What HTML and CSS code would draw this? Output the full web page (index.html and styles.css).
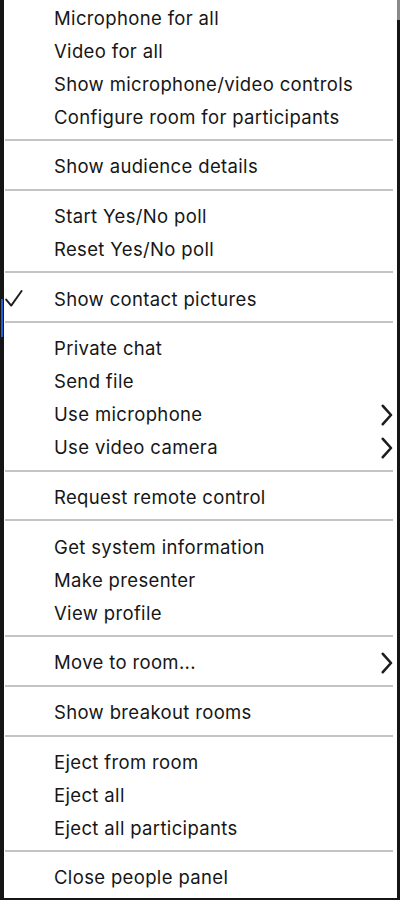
FILE: index.html
```html
<!DOCTYPE html>
<html lang="en">
<head>
<meta charset="utf-8">
<title>People menu</title>
<link rel="stylesheet" href="styles.css">
</head>
<body>
<div class="frame">
  <div class="focus-edge"></div>
  <div class="top-edge"></div>
  <ul class="menu">
    <li class="item"><span class="mark"></span><span class="label">Microphone for all</span></li>
    <li class="item"><span class="mark"></span><span class="label">Video for all</span></li>
    <li class="item"><span class="mark"></span><span class="label">Show microphone/video controls</span></li>
    <li class="item"><span class="mark"></span><span class="label">Configure room for participants</span></li>
    <li class="sep"></li>
    <li class="item"><span class="mark"></span><span class="label">Show audience details</span></li>
    <li class="sep"></li>
    <li class="item"><span class="mark"></span><span class="label">Start Yes/No poll</span></li>
    <li class="item"><span class="mark"></span><span class="label">Reset Yes/No poll</span></li>
    <li class="sep"></li>
    <li class="item"><span class="mark"><svg class="check" width="18" height="18" viewBox="0 0 18 18"><path d="M1.2 9.6 L6.2 15.6 L16.6 1" /></svg></span><span class="label">Show contact pictures</span></li>
    <li class="sep"></li>
    <li class="item"><span class="mark"></span><span class="label">Private chat</span></li>
    <li class="item"><span class="mark"></span><span class="label">Send file</span></li>
    <li class="item"><span class="mark"></span><span class="label">Use microphone</span><svg class="chev" width="12" height="22" viewBox="0 0 12 22"><path d="M1.8 1.8 L10 11 L1.8 20.2" /></svg></li>
    <li class="item"><span class="mark"></span><span class="label">Use video camera</span><svg class="chev" width="12" height="22" viewBox="0 0 12 22"><path d="M1.8 1.8 L10 11 L1.8 20.2" /></svg></li>
    <li class="sep"></li>
    <li class="item"><span class="mark"></span><span class="label">Request remote control</span></li>
    <li class="sep"></li>
    <li class="item"><span class="mark"></span><span class="label">Get system information</span></li>
    <li class="item"><span class="mark"></span><span class="label">Make presenter</span></li>
    <li class="item"><span class="mark"></span><span class="label">View profile</span></li>
    <li class="sep"></li>
    <li class="item"><span class="mark"></span><span class="label">Move to room...</span><svg class="chev" width="12" height="22" viewBox="0 0 12 22"><path d="M1.8 1.8 L10 11 L1.8 20.2" /></svg></li>
    <li class="sep"></li>
    <li class="item"><span class="mark"></span><span class="label">Show breakout rooms</span></li>
    <li class="sep"></li>
    <li class="item"><span class="mark"></span><span class="label">Eject from room</span></li>
    <li class="item"><span class="mark"></span><span class="label">Eject all</span></li>
    <li class="item"><span class="mark"></span><span class="label">Eject all participants</span></li>
    <li class="sep"></li>
    <li class="item"><span class="mark"></span><span class="label">Close people panel</span></li>
  </ul>
</div>
</body>
</html>
```

FILE: styles.css
```css
html, body {
  margin: 0;
  padding: 0;
  background: #151515;
}

.frame {
  position: relative;
  width: 400px;
  height: 900px;
  box-sizing: border-box;
  padding: 0 3px 2px 4px;
  display: flex;
  flex-direction: column;
}

.focus-edge {
  position: absolute;
  left: 1px;
  top: 299px;
  width: 2px;
  height: 38px;
  background: #1f5fd0;
}

.top-edge {
  position: absolute;
  right: 0;
  top: 0;
  width: 3px;
  height: 20px;
  background: #8a8a8a;
}

.menu {
  list-style: none;
  margin: 0;
  padding: 1.5px 0 0 0;
  flex: 1;
  background: #ffffff;
  font-family: "Inter", "Liberation Sans", sans-serif;
  font-size: 18.5px;
  letter-spacing: 0.35px;
  color: #161616;
}

.item {
  height: 33px;
  display: grid;
  grid-template-columns: 50px 1fr auto;
  align-items: center;
  padding-right: 4px;
}

.mark {
  display: flex;
  align-items: center;
  padding-left: 1px;
}

.label {
  white-space: nowrap;
  line-height: 33px;
}

.sep {
  height: 16.7px;
  box-sizing: border-box;
  padding-top: 5.5px;
}

.sep::before {
  content: "";
  display: block;
  margin-left: 1px;
  margin-right: 4px;
  height: 2px;
  background: #c4c4c4;
}

.check path {
  fill: none;
  stroke: #1d1d1d;
  stroke-width: 1.9;
  stroke-linecap: round;
  stroke-linejoin: round;
}

.chev path {
  fill: none;
  stroke: #1d1d1d;
  stroke-width: 2.6;
  stroke-linecap: round;
  stroke-linejoin: round;
}
```
